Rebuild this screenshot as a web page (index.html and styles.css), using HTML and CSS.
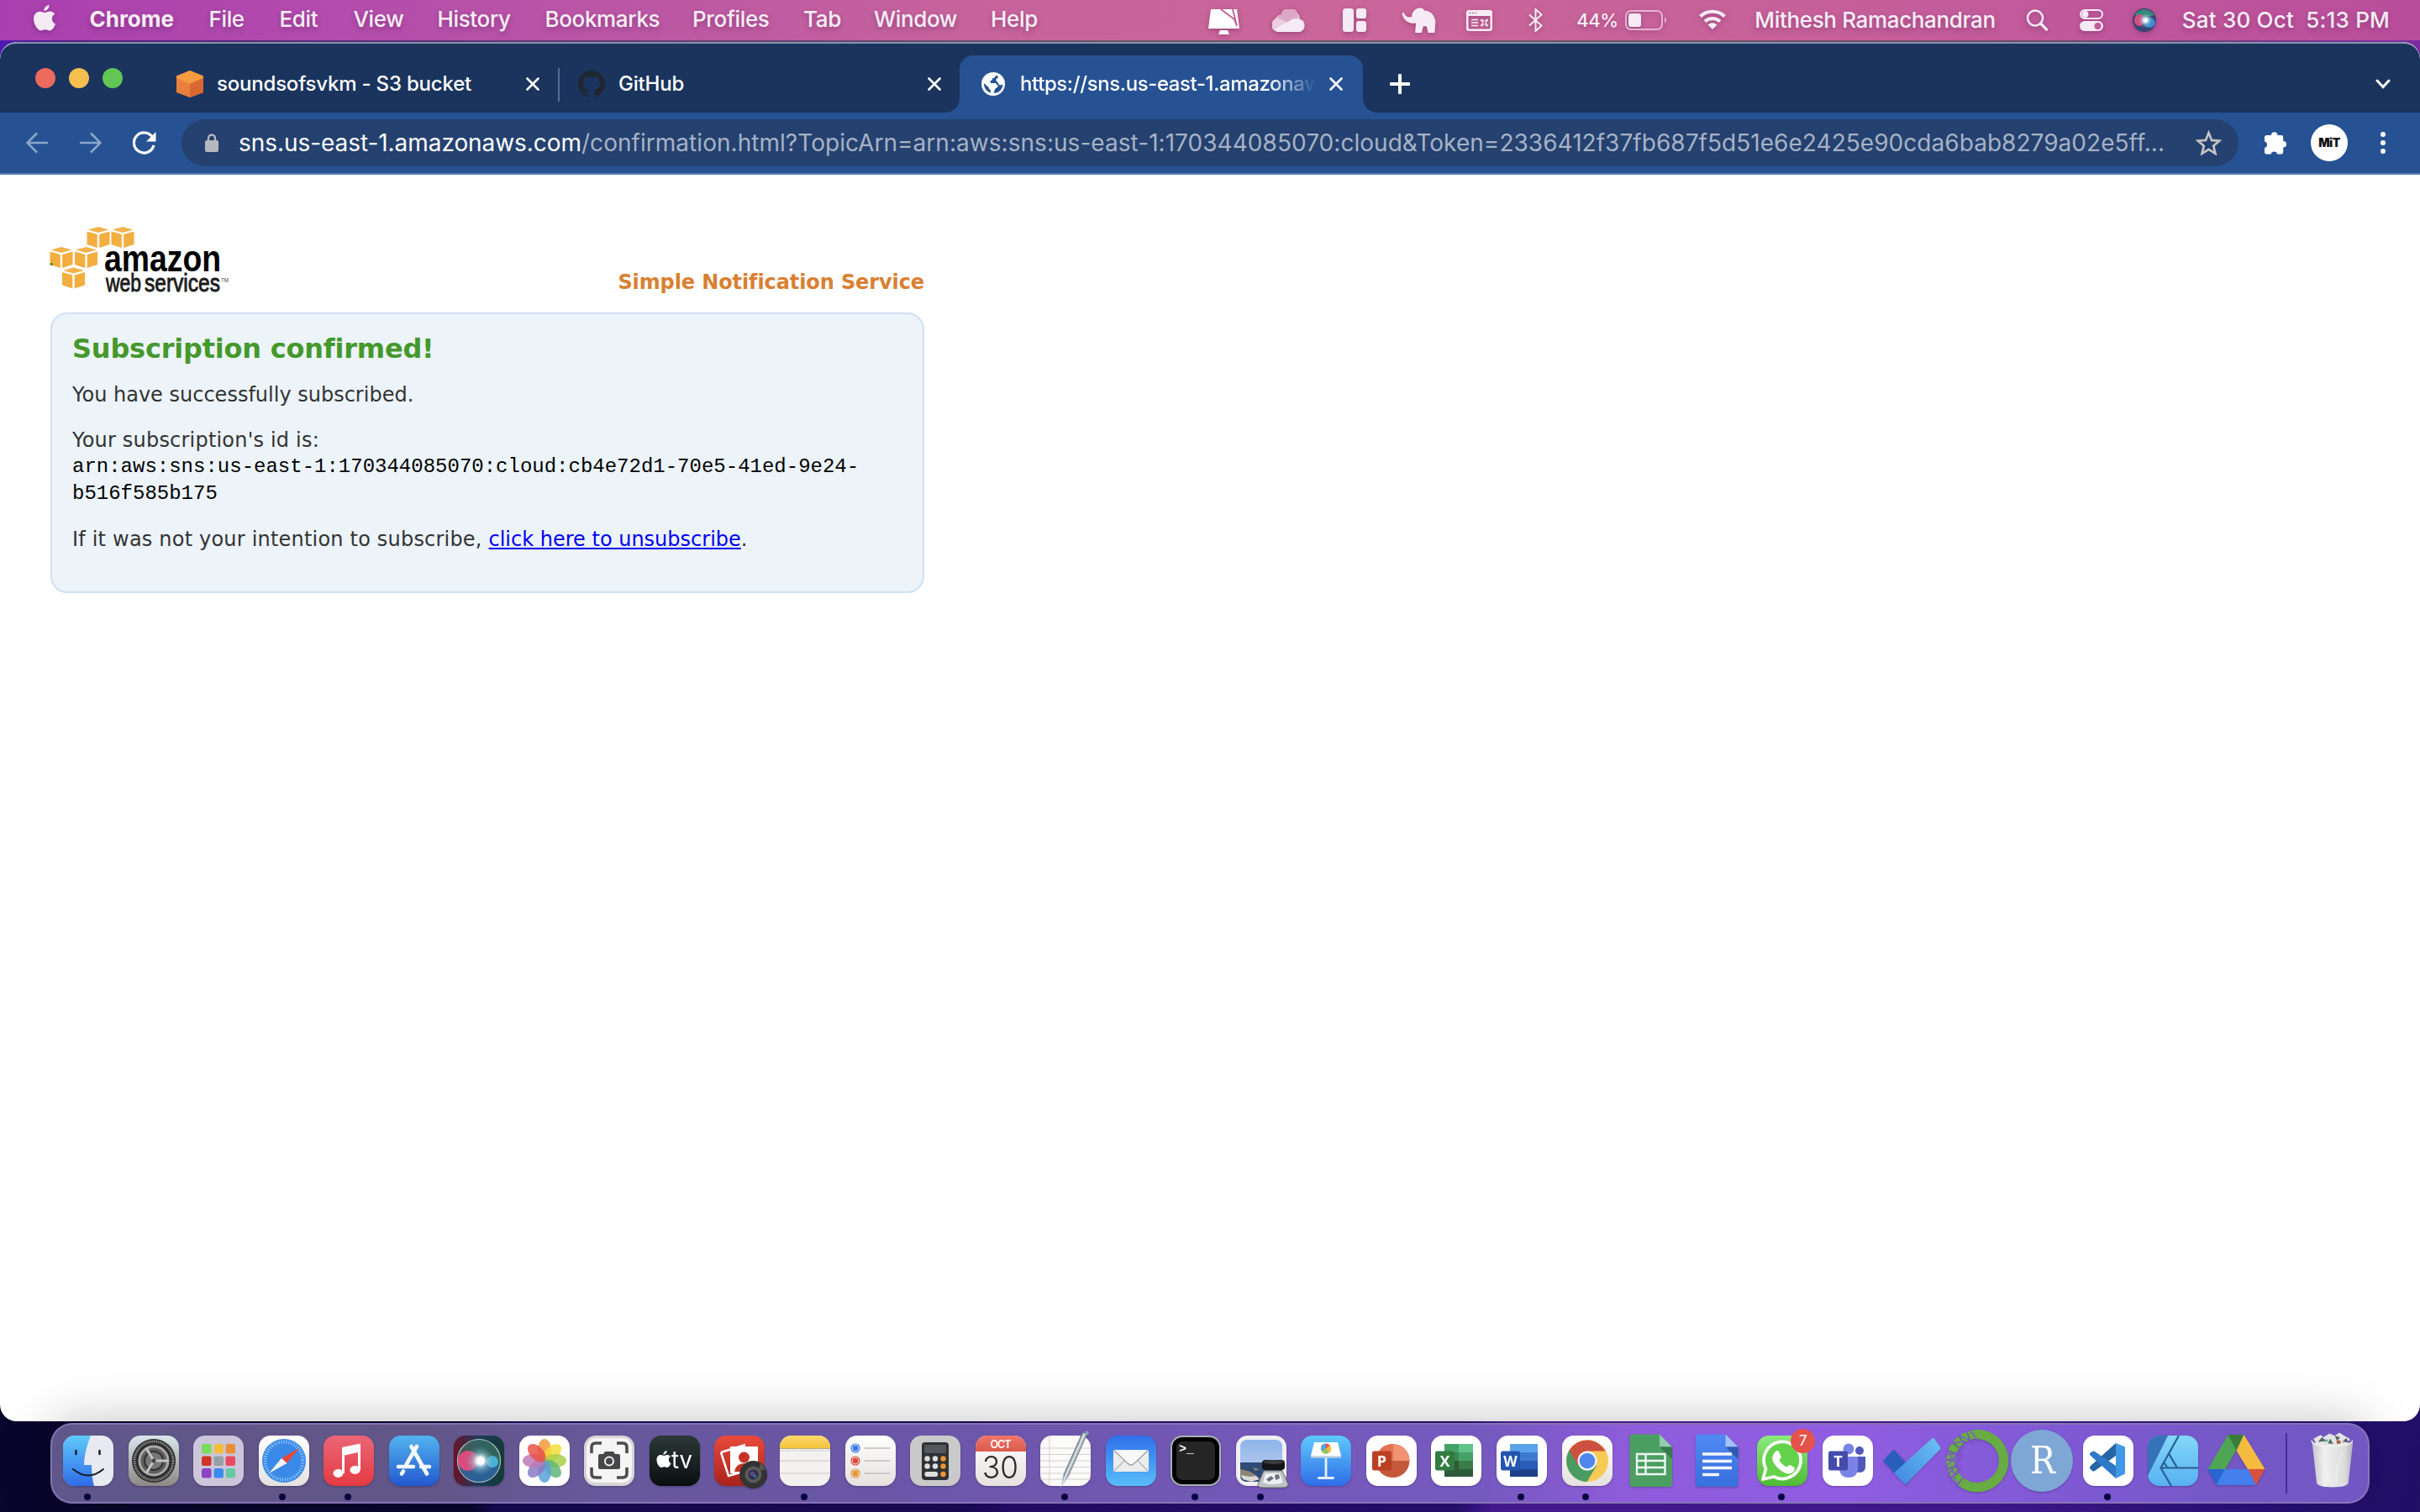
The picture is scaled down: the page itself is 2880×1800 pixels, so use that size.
FILE: index.html
```html
<!DOCTYPE html>
<html lang="en">
<head>
<meta charset="utf-8">
<title>Subscription confirmed</title>
<link rel="stylesheet" href="styles.css">
</head>
<body>
<svg class="defs" width="0" height="0">
  <defs>
    <linearGradient id="gFinder" x2="0" y2="1"><stop stop-color="#5fc9fb"/><stop offset="1" stop-color="#2f6ce8"/></linearGradient>
    <linearGradient id="gPaper" x2="0" y2="1"><stop stop-color="#fff"/><stop offset="1" stop-color="#e4e1df"/></linearGradient>
    <linearGradient id="gSteel" x2="0" y2="1"><stop stop-color="#d9e6ec"/><stop offset="1" stop-color="#8b8884"/></linearGradient>
    <linearGradient id="gSky" x2="0" y2="1"><stop stop-color="#51b4ee"/><stop offset="1" stop-color="#2358cf"/></linearGradient>
    <linearGradient id="gMusic" x2="0" y2="1"><stop stop-color="#ec6678"/><stop offset="1" stop-color="#e33a41"/></linearGradient>
    <linearGradient id="gMail" x2="0" y2="1"><stop stop-color="#2f6feb"/><stop offset="1" stop-color="#58bdf8"/></linearGradient>
    <linearGradient id="gDark" x2="0" y2="1"><stop stop-color="#2c3936"/><stop offset="1" stop-color="#0a0e10"/></linearGradient>
    <linearGradient id="gRed" x2="0" y2="1"><stop stop-color="#ea4a3c"/><stop offset="1" stop-color="#a8221b"/></linearGradient>
    <linearGradient id="gYellow" x2="0" y2="1"><stop stop-color="#fbd96c"/><stop offset="1" stop-color="#f5c33c"/></linearGradient>
    <linearGradient id="gCoral" x2="0" y2="1"><stop stop-color="#f0766b"/><stop offset="1" stop-color="#db5a4c"/></linearGradient>
    <linearGradient id="gGreen" x2="0" y2="1"><stop stop-color="#8bea7d"/><stop offset="1" stop-color="#4fba35"/></linearGradient>
    <linearGradient id="gScene" x2="0" y2="1"><stop stop-color="#8eb4ea"/><stop offset="1" stop-color="#c2d3ee"/></linearGradient>
    <linearGradient id="gTodo" x1="1" x2="0" y2="1"><stop stop-color="#6cc0f5"/><stop offset="1" stop-color="#3f86e0"/></linearGradient>
    <linearGradient id="gAff" x2="0" y2="1"><stop stop-color="#82d7f8"/><stop offset="1" stop-color="#58b0f2"/></linearGradient>
    <linearGradient id="gDocs" x2="0" y2="1"><stop stop-color="#5088f4"/><stop offset="1" stop-color="#376fdc"/></linearGradient>
    <linearGradient id="gSiriBg"><stop stop-color="#6a1428"/><stop offset=".5" stop-color="#1c3a5c"/><stop offset="1" stop-color="#143c36"/></linearGradient>
    <radialGradient id="gSiri" cx=".52" cy=".5" r=".5"><stop stop-color="#fff"/><stop offset=".25" stop-color="#e8f6f8"/><stop offset=".55" stop-color="#a5cfdc" stop-opacity=".5"/><stop offset="1" stop-color="#5c9fac" stop-opacity=".05"/></radialGradient>
    <linearGradient id="gPen"><stop stop-color="#5f6a74"/><stop offset=".5" stop-color="#e3edf2"/><stop offset="1" stop-color="#6b7782"/></linearGradient>
    <linearGradient id="gTrash"><stop stop-color="#c6c6c9"/><stop offset=".3" stop-color="#efefef"/><stop offset=".8" stop-color="#dcdcdd"/><stop offset="1" stop-color="#b3b1bb"/></linearGradient>
    <symbol id="close" viewBox="0 0 16 16"><path d="M1.5 1.5 14.5 14.5M14.5 1.5 1.5 14.5" stroke="#fff" stroke-width="2.6" stroke-linecap="round"/></symbol>
    <symbol id="apple" viewBox="0 0 26 32"><path d="M18.5 0c.3 3.600-2.700 7.100-6.200 7.100C11.900 3.900 15 .5 18.500 0zM13.500 9c1.200 0 3.200-1.400 6-1.400 2.300.1 4.500 1.300 5.700 3.100-5 3-4 9.900.8 11.800-1 2.900-3.500 7.700-6.500 7.900-2.200.1-2.800-1.200-5.600-1.200s-3.500 1.200-5.600 1.200C4.800 30.400 0 22.700 0 16.600 0 10.700 3.900 7.700 7.600 7.700c2.500 0 4.500 1.300 5.900 1.300z"/></symbol>
    <symbol id="cube" viewBox="0 0 28 27"><path d="M1.500 4.500 14 1l12.500 3.500L14 8z" fill="#f3b34a"/><path d="M.5 6.500 12.800 10v16L.5 22zM27.500 6.500 15.200 10v16l12.300-4z" fill="#f2ae3f"/></symbol>
  </defs>
</svg>

<header class="menubar">
  <svg class="apple" viewBox="0 0 26 32"><use href="#apple" fill="#f6ebf5"/></svg>
  <nav class="menus">
    <span class="app">Chrome</span><span>File</span><span>Edit</span><span>View</span><span>History</span><span>Bookmarks</span><span>Profiles</span><span>Tab</span><span>Window</span><span>Help</span>
  </nav>
  <div class="status">
    <svg style="width:37px" viewBox="0 0 37 30"><path d="M3 0h31l3 23H0z" fill="#fff"/><path d="M15 0 31 12 34 20M29 0l5 20" fill="none" stroke="#c05c92" stroke-width="1.800"/><path d="M14 25h9l2 5H12z" fill="#fff"/></svg>
    <svg style="width:40px" viewBox="0 0 40 28"><path d="M8 28A8.500 8.500 0 0 1 3 12 10 10 0 0 1 14 7a10 9 0 0 1 19 5 8.200 8.200 0 0 1 0 16z" fill="#eccfe0"/><path d="M10 7a10 10 0 0 1 21 3l-11 7L5 10z" fill="#dda7c6"/><path d="M3 24 25 12c12-3 19 12 8 16H8q-3 0-5-4z" fill="#f6ebf5"/></svg>
    <svg style="width:28px" viewBox="0 0 28 28"><rect width="13" height="28" rx="3.500"/><rect x="16" width="12" height="12" rx="3"/><rect x="16" y="15" width="12" height="13" rx="3"/></svg>
    <svg style="width:41px" viewBox="0 0 41 31"><path d="M0 7l2-1q3 8 10 5C12 4 18-1 25 1l3 3c8 0 12 7 13 13l-1 14h-8l-2-8h-4l-2 8h-8l1-12c-6 2-16-2-17-12z"/></svg>
    <svg style="width:31px" viewBox="0 0 31 25"><path fill-rule="evenodd" d="M3 0h25q3 0 3 3v19q0 3-3 3H3q-3 0-3-3V3q0-3 3-3zM2.500 7v14q0 1.500 1.500 1.500h23q1.500 0 1.500-1.500V7z"/><path d="M6 11.500h8M6 15h8M6 18.500h8" stroke="#f6ebf5" stroke-width="1.700"/><circle cx="4.500" cy="3.500" r="1" fill="#c96497"/><circle cx="8" cy="3.500" r="1" fill="#c96497"/><circle cx="11.500" cy="3.500" r="1" fill="#c96497"/><g fill="none" stroke="#f6ebf5" stroke-width="1.200"><path d="M19.500 12.500v5M23.500 12.500v5M19 13h5M19 17h5"/><circle cx="18.500" cy="12" r="1"/><circle cx="24.500" cy="12" r="1"/><circle cx="18.500" cy="18" r="1"/><circle cx="24.500" cy="18" r="1"/></g></svg>
    <svg style="width:17px" viewBox="0 0 17 28"><path d="M1 7.500 15.500 20.500 8.500 27V1l7 6.500L1 20.500" fill="none" stroke="#f6ebf5" stroke-width="2"/></svg>
    <span class="pct">44%</span>
    <svg style="width:51px" viewBox="0 0 51 26"><rect x="1" y="2" width="43" height="22" rx="6" fill="none" stroke="#e7b3d0" stroke-width="2"/><rect x="4" y="5" width="15" height="16" rx="3"/><path d="M47 9q4 4 0 8z" fill="#e7b3d0"/></svg>
    <svg style="width:32px" viewBox="0 0 32 24"><g fill="none" stroke="#f6ebf5" stroke-width="4"><path d="M1.500 8.500a21 21 0 0 1 29 0"/><path d="M7 14.500a13.500 13.500 0 0 1 18 0"/></g><path d="M10.500 18.500q5.500-4.500 11 0L16 24z"/></svg>
    <span>Mithesh Ramachandran</span>
    <svg style="width:26px" viewBox="0 0 26 26"><circle cx="11" cy="10.500" r="9" fill="none" stroke="#f6ebf5" stroke-width="2.500"/><path d="m17.500 17 7 7" stroke="#f6ebf5" stroke-width="3.200" stroke-linecap="round"/></svg>
    <svg style="width:28px" viewBox="0 0 28 26"><rect x="1" y="1" width="26" height="10" rx="5" fill="none" stroke="#f6ebf5" stroke-width="2"/><circle cx="6.500" cy="6" r="4"/><rect y="14" width="28" height="12" rx="6"/><circle cx="21.500" cy="20" r="4" fill="#c05b98"/></svg>
    <svg style="width:28px" viewBox="0 0 28 28"><circle cx="14" cy="14" r="14" fill="#37456f"/><path d="M2 8a14 14 0 0 1 24 0q-12 4-24 0z" fill="#36897c"/><ellipse cx="8" cy="14" rx="6" ry="7" fill="#dc4a80"/><ellipse cx="20" cy="17" rx="7" ry="6" fill="#3d87d2"/><circle cx="15" cy="14" r="9" fill="url(#gSiri)"/></svg>
    <span class="clock">Sat 30 Oct&nbsp; 5:13 PM</span>
  </div>
</header>

<main class="window">
  <div class="tabstrip">
    <div class="lights"><i class="red"></i><i class="amber"></i><i class="green"></i></div>
    <div class="tab divided">
      <svg class="fav" viewBox="0 0 32 32"><path d="M16 0 32 6.500V26L16 32 0 26V6.500z" fill="#e8803c"/><path d="M16 0 32 6.500V9L16 16 0 9V6.500z" fill="#f29c40"/><path d="M16 15.500 32 9v17L16 32z" fill="#db6730"/></svg>
      <span class="title">soundsofsvkm - S3 bucket</span>
      <svg class="x"><use href="#close"/></svg>
    </div>
    <div class="tab">
      <svg class="fav" viewBox="0 0 16 16"><path fill="#20272f" d="M8 0C3.580 0 0 3.580 0 8c0 3.540 2.290 6.530 5.470 7.590.4.070.55-.17.55-.38 0-.19-.01-.82-.01-1.490-2.010.37-2.530-.49-2.690-.94-.09-.23-.48-.94-.82-1.130-.28-.15-.68-.52-.01-.53.63-.01 1.080.58 1.230.82.72 1.210 1.870.87 2.330.66.07-.52.28-.87.51-1.070-1.780-.2-3.640-.89-3.640-3.950 0-.87.31-1.590.82-2.150-.08-.2-.36-1.020.08-2.120 0 0 .67-.21 2.200.82.64-.18 1.320-.27 2-.27s1.360.09 2 .27c1.530-1.040 2.200-.82 2.200-.82.44 1.100.16 1.920.08 2.120.51.56.82 1.270.82 2.150 0 3.070-1.870 3.750-3.650 3.950.29.25.54.73.54 1.480 0 1.070-.01 1.930-.01 2.200 0 .21.15.46.55.38A8.010 8.010 0 0 0 16 8c0-4.420-3.580-8-8-8z"/></svg>
      <span class="title">GitHub</span>
      <svg class="x"><use href="#close"/></svg>
    </div>
    <div class="tab active">
      <svg class="fav" viewBox="0 0 32 32"><circle cx="16" cy="16" r="14" fill="#fff"/><path d="M18.500 5.500c1 2-1.500 3.500-3.500 4 0 2-1 2.500-2.500 2.500l.5 3h6c1.500 1 1 2.500 2.500 2.500 1 3-3 3-3.500 5l-1.500 4.200c6 .5 11-4.500 11-10.700-1 1.500-3 1.500-4.500 1l-2-3.500c-2-.5-2-3-1-4 2 0 2-2 1.500-3zM5 15l6 5.500c-.5 2 2 2 2 3.500v2.500C8 25 4.800 20.500 5 15z" fill="#265294"/></svg>
      <span class="title fade">https://sns.us-east-1.amazonaws.com</span>
      <svg class="x"><use href="#close"/></svg>
    </div>
    <svg class="plus" viewBox="0 0 24 24"><path d="M12 1.500v21M1.500 12h21" stroke="#fff" stroke-width="4" stroke-linecap="round"/></svg>
    <svg class="chev" viewBox="0 0 18 12"><path d="m2 2 7 7.500L16 2" fill="none" stroke="#fff" stroke-width="3" stroke-linecap="round"/></svg>
  </div>

  <div class="toolbar">
    <svg class="nav-back" viewBox="0 0 26 26"><path d="M26 13H2M13 1.500 1.500 13 13 24.500" fill="none" stroke="#8aa4cb" stroke-width="2.600"/></svg>
    <svg class="nav-fwd" viewBox="0 0 26 26"><path d="M0 13h24M13 1.500 24.500 13 13 24.500" fill="none" stroke="#8aa4cb" stroke-width="2.600"/></svg>
    <svg class="reload" viewBox="0 0 28 28"><path d="M23.500 7.500A12 12 0 1 0 25 17" fill="none" stroke="#fff" stroke-width="3.200"/><path d="M27.500 1v11.500H16z" fill="#fff"/></svg>
    <div class="omnibox">
      <svg class="lock" viewBox="0 0 16 22"><rect y="8" width="16" height="14" rx="2" fill="#b4b7bd"/><path d="M4 9V5.500a4 4 0 0 1 8 0V9" fill="none" stroke="#b4b7bd" stroke-width="2.400"/></svg>
      <span class="url"><b>sns.us-east-1.amazonaws.com</b>/confirmation.html?TopicArn=arn:aws:sns:us-east-1:170344085070:cloud&amp;Token=2336412f37fb687f5d51e6e2425e90cda6bab8279a02e5ff...</span>
      <svg class="star" viewBox="0 0 30 29"><path d="m15 3 3.400 8.500 9 .7-6.900 5.800 2.200 8.900L15 22l-7.700 4.900 2.200-8.900-6.900-5.800 9-.7z" fill="none" stroke="#c5c3c3" stroke-width="2.600"/></svg>
    </div>
    <svg class="puzzle" viewBox="0 0 28 29"><path d="M2.500 6H8a3.700 3.700 0 0 1 7.400 0H20q2.200 0 2.200 2.300V13a3.800 3.800 0 0 1 0 7.600v5.200q0 2.700-2.400 2.700h-4.600a3.900 3.900 0 0 0-7.600 0H2.500Q0 28.500 0 25.800v-4.700a3.900 3.900 0 0 0 0-7.600V8.500Q0 6 2.500 6z" fill="#fff"/></svg>
    <div class="avatar">MiT</div>
    <svg class="dots" viewBox="0 0 6 26"><circle cx="3" cy="3" r="3"/><circle cx="3" cy="13" r="3"/><circle cx="3" cy="23" r="3"/></svg>
  </div>

  <section class="page">
    <div class="brand">
      <svg class="aws" viewBox="0 0 212 78">
        <use href="#cube" x="43" y="-1" width="28" height="27"/><use href="#cube" x="72" y="-1" width="28" height="27"/>
        <use href="#cube" x="-1" y="23" width="28" height="27"/><use href="#cube" x="28.500" y="23" width="28" height="27"/><use href="#cube" x="13.500" y="47.500" width="28" height="27"/>
        <rect y="43" width="2.500" height="3" fill="#3f8a2d"/>
        <text x="64" y="53" font-size="45" font-weight="700" textLength="139" lengthAdjust="spacingAndGlyphs">amazon</text>
        <text x="66" y="77" font-size="29.500" stroke="#1c1c1c" stroke-width=".9" fill="#1c1c1c" textLength="42" lengthAdjust="spacingAndGlyphs">web</text>
        <text x="112" y="77" font-size="29.500" stroke="#1c1c1c" stroke-width=".9" fill="#1c1c1c" textLength="90" lengthAdjust="spacingAndGlyphs">services</text>
        <text x="203" y="66" font-size="7" fill="#444" textLength="9" lengthAdjust="spacingAndGlyphs">TM</text>
      </svg>
      <h2>Simple Notification Service</h2>
    </div>
    <article class="panel">
      <h1>Subscription confirmed!</h1>
      <p>You have successfully subscribed.</p>
      <p class="idp">Your subscription's id is:</p>
      <code>arn:aws:sns:us-east-1:170344085070:cloud:cb4e72d1-70e5-41ed-9e24-<br>b516f585b175</code>
      <p class="last">If it was not your intention to subscribe, <a href="#">click here to unsubscribe</a>.</p>
    </article>
  </section>
</main>

<footer class="dock">
  <div class="apps">
    <div class="slot run"><svg class="tile" viewBox="0 0 60 60"><rect width="60" height="60" fill="#e7eaf0"/><path d="M0 0h33C28 12 25 26 25 35h9c0 10 1 18 3 25H0z" fill="url(#gFinder)"/><path d="M15.500 18v4M43.500 18v4" stroke="#1a2530" stroke-width="2.600" stroke-linecap="round"/><path d="M12 40q18 15 36 0" fill="none" stroke="#14202c" stroke-width="2" stroke-linecap="round"/></svg></div>
    <div class="slot"><svg class="tile" viewBox="0 0 60 60"><rect width="60" height="60" fill="url(#gSteel)"/><circle cx="30" cy="30" r="26" fill="#2c2c2c"/><circle cx="30" cy="30" r="23" fill="none" stroke="#8c8c8c" stroke-width="3" stroke-dasharray="1.500 1"/><circle cx="30" cy="30" r="17" fill="#5f5f60" stroke="#a9a9a9" stroke-width="3"/><circle cx="30" cy="30" r="11" fill="#777" stroke="#333" stroke-width="2"/><path d="M30 30h17M30 30 21 15M30 30 21 45" stroke="#c4c4c4" stroke-width="3"/><circle cx="30" cy="30" r="2.500" fill="#444"/></svg></div>
    <div class="slot"><svg class="tile" viewBox="0 0 60 60"><rect width="60" height="60" fill="#cbc6da"/><rect x="10" y="10" width="11.500" height="11.500" rx="2.500" fill="#76de5a"/><rect x="24.500" y="10" width="11.500" height="11.500" rx="2.500" fill="#f4bd3e"/><rect x="38.500" y="10" width="11.500" height="11.500" rx="2.500" fill="#e88f35"/><rect x="10" y="24.500" width="11.500" height="11.500" rx="2.500" fill="#cf3426"/><rect x="24.500" y="24.500" width="11.500" height="11.500" rx="2.500" fill="#97a0a4"/><rect x="38.500" y="24.500" width="11.500" height="11.500" rx="2.500" fill="#e94b60"/><rect x="10" y="39" width="11.500" height="11.500" rx="2.500" fill="#8a44c4"/><rect x="24.500" y="39" width="11.500" height="11.500" rx="2.500" fill="#3a8bee"/><rect x="38.500" y="39" width="11.500" height="11.500" rx="2.500" fill="#66c9a4"/></svg></div>
    <div class="slot run"><svg class="tile" viewBox="0 0 60 60"><rect width="60" height="60" fill="url(#gPaper)"/><circle cx="30" cy="30" r="26" fill="#3989e8"/><circle cx="30" cy="30" r="22.500" fill="none" stroke="#a5d0fa" stroke-width="4" stroke-dasharray="1 2"/><path d="M48.500 14.500 33.500 33 27 27z" fill="#e8483c"/><path d="M12 45 27 27l6.500 6z" fill="#f3f3f3"/></svg></div>
    <div class="slot run"><svg class="tile" viewBox="0 0 60 60"><rect width="60" height="60" fill="url(#gMusic)"/><path d="M22 14 44 9.500V41h-3V20l-16 3.500V45h-3z" fill="#fff"/><ellipse cx="17.500" cy="45" rx="6" ry="5" fill="#fff"/><ellipse cx="37.500" cy="41" rx="6" ry="5" fill="#fff"/></svg></div>
    <div class="slot"><svg class="tile" viewBox="0 0 60 60"><rect width="60" height="60" fill="url(#gSky)"/><g stroke="#f4f8fc" stroke-width="4.600" stroke-linecap="round"><path d="M33 13 20.500 34.500M26.500 13 45 45.500M11 37h18M38 37h10M17 42.500l-2 3"/></g></svg></div>
    <div class="slot"><svg class="tile" viewBox="0 0 60 60"><rect width="60" height="60" fill="url(#gSiriBg)"/><circle cx="30" cy="30" r="25.500" fill="#3f7d68" fill-opacity=".6" stroke="#a9c2be" stroke-width="1.200"/><path d="M6 36q24-10 48 0-6 19-24 19T6 36z" fill="#2b62a8" opacity=".75"/><circle cx="17" cy="30" r="12" fill="#ec4a80" opacity=".9"/><circle cx="46" cy="31" r="7" fill="#4bb9e6" opacity=".9"/><circle cx="31" cy="30" r="17" fill="url(#gSiri)"/><circle cx="32" cy="30" r="5" fill="#fff" opacity=".8"/></svg></div>
    <div class="slot"><svg class="tile" viewBox="0 0 60 60"><rect width="60" height="60" fill="#fff"/><g fill-opacity=".85"><ellipse cx="30" cy="17" rx="8" ry="13" fill="#f19a37"/><ellipse cx="30" cy="17" rx="8" ry="13" fill="#f4dd3a" transform="rotate(45 30 30)"/><ellipse cx="30" cy="17" rx="8" ry="13" fill="#a9cf4a" transform="rotate(90 30 30)"/><ellipse cx="30" cy="17" rx="8" ry="13" fill="#62b678" transform="rotate(135 30 30)"/><ellipse cx="30" cy="17" rx="8" ry="13" fill="#5aa0dc" transform="rotate(180 30 30)"/><ellipse cx="30" cy="17" rx="8" ry="13" fill="#8a7cc4" transform="rotate(225 30 30)"/><ellipse cx="30" cy="17" rx="8" ry="13" fill="#c079b4" transform="rotate(270 30 30)"/><ellipse cx="30" cy="17" rx="8" ry="13" fill="#ea5247" transform="rotate(315 30 30)"/></g></svg></div>
    <div class="slot"><svg class="tile" viewBox="0 0 60 60"><rect width="60" height="60" fill="#d5d5d7"/><rect x="3" y="3" width="54" height="53" rx="11" fill="#f5f5f5"/><path d="M9 21v-7q0-5 5-5h7M39 9h7q5 0 5 5v7M51 38v7q0 5-5 5h-7M21 50h-7q-5 0-5-5v-7" fill="none" stroke="#4d4d4f" stroke-width="3.600"/><path d="M19 22h4l2-3h10l2 3h4q2 0 2 2v14q0 2-2 2H19q-2 0-2-2V24q0-2 2-2z" fill="#474749"/><circle cx="30" cy="30.500" r="5" fill="none" stroke="#f2f2f2" stroke-width="2"/></svg></div>
    <div class="slot"><svg class="tile" viewBox="0 0 60 60"><rect width="60" height="60" fill="url(#gDark)"/><use href="#apple" x="8" y="18" width="18" height="21" fill="#fff"/><text x="26" y="39" font-family="Inter" font-size="29" font-weight="400" fill="#fff" textLength="25" lengthAdjust="spacingAndGlyphs">tv</text></svg></div>
    <div class="slot"><svg class="free" viewBox="0 0 60 60"><rect width="60" height="60" rx="14" fill="url(#gRed)"/><path d="m8 20 29-9M8 20l9 28 14-4" fill="none" stroke="#fff" stroke-width="2.500"/><path d="M19 13h33v32H19z" fill="#fff"/><circle cx="35.500" cy="26" r="6.500" fill="#c63228"/><path d="M24 43q2-10 11.500-10T47 43z" fill="#c63228"/><circle cx="46.500" cy="46.500" r="16.500" fill="#333"/><path d="M55 33a16 16 0 0 1 6 7l-9 3z" fill="#555"/><circle cx="46.500" cy="46.500" r="10" fill="#5a5a5c"/><circle cx="46.500" cy="46.500" r="6" fill="#2b2f48"/><circle cx="45.500" cy="45.500" r="3" fill="#5c4580"/><circle cx="48.500" cy="48.500" r="2" fill="#2c6f84"/></svg></div>
    <div class="slot run"><svg class="tile" viewBox="0 0 60 60"><rect width="60" height="60" fill="#f4f2f0"/><rect width="60" height="15" fill="url(#gYellow)"/><path d="M0 15.500h60" stroke="#b7a981" stroke-width="1.200"/><path d="M0 18h60" stroke="#aaa" stroke-width="1" stroke-dasharray="1.500 1.500"/><path d="M0 30h60M0 45h60" stroke="#d6d4d3" stroke-width="1.300"/></svg></div>
    <div class="slot"><svg class="tile" viewBox="0 0 60 60"><rect width="60" height="60" fill="url(#gPaper)"/><g fill="none" stroke-width="1.200"><circle cx="12" cy="15" r="5" stroke="#3478f0"/><circle cx="12" cy="30" r="5" stroke="#e0493c"/><circle cx="12" cy="45" r="5" stroke="#e69435"/></g><circle cx="12" cy="15" r="3.400" fill="#3478f0"/><circle cx="12" cy="30" r="3.400" fill="#e0493c"/><circle cx="12" cy="45" r="3.400" fill="#e69435"/><path d="M22.500 15h31M22.500 30h31M22.500 45h31" stroke="#bfbfc1" stroke-width="1.300"/></svg></div>
    <div class="slot"><svg class="tile" viewBox="0 0 60 60"><rect width="60" height="60" fill="#c9c9ca"/><rect x="14" y="8" width="32" height="45" rx="4" fill="#2e3236"/><rect x="17" y="11" width="26" height="10" rx="1.500" fill="#53585d"/><g fill="#dedede"><circle cx="20.500" cy="27.500" r="3.200"/><circle cx="30" cy="27.500" r="3.200"/><circle cx="20.500" cy="36.500" r="3.200"/><circle cx="30" cy="36.500" r="3.200"/><rect x="17.300" y="43" width="16" height="6" rx="3"/></g><g fill="#ee9430"><circle cx="39.500" cy="27.500" r="3.200"/><circle cx="39.500" cy="36.500" r="3.200"/><circle cx="39.500" cy="46" r="3.200"/></g></svg></div>
    <div class="slot"><svg class="tile" viewBox="0 0 60 60"><rect width="60" height="60" fill="url(#gPaper)"/><rect width="60" height="19" fill="url(#gCoral)"/><text x="30" y="14.500" text-anchor="middle" font-family="Inter" font-weight="600" font-size="12.500" fill="#fff" textLength="25">OCT</text><text x="29.500" y="50.500" text-anchor="middle" font-family="Inter" font-weight="300" font-size="37" fill="#2b2b2d" textLength="43" lengthAdjust="spacingAndGlyphs">30</text></svg></div>
    <div class="slot run"><svg class="free" viewBox="0 0 60 60"><rect width="60" height="60" rx="14" fill="#fbfbfa"/><path d="M0 15h60M0 22.500h60M0 30h60M0 37.500h60M0 45h60M0 52h60" stroke="#cfcfcf" stroke-width="1.200"/><path d="M11 0v60" stroke="#edcdc8" stroke-width="1.200"/><path d="M0 0h6.500v54L3.300 71 0 54z" transform="translate(50 -4) rotate(24)" fill="url(#gPen)"/><path d="m54-6 4 2-1 4-4-2z" fill="#7aa2bc"/></svg></div>
    <div class="slot"><svg class="tile" viewBox="0 0 60 60"><rect width="60" height="60" fill="url(#gMail)"/><rect x="9" y="17" width="42" height="26" rx="2" fill="#ececec"/><path d="m10 42 15-15m10 0 15 15" stroke="#aeb1b4" fill="none" stroke-width="1.200"/><path d="m10 18 16 15q4 4 8 0l16-15" fill="#f8f8f8" stroke="#9c9fa2" stroke-width="1.200"/></svg></div>
    <div class="slot run"><svg class="tile" viewBox="0 0 60 60"><rect width="60" height="60" fill="#a9b3b7"/><rect x="2" y="2" width="56" height="56" rx="12" fill="#000"/><rect x="7" y="7" width="46" height="46" rx="7" fill="#252526"/><text x="10" y="20" font-family="Liberation Mono" font-weight="700" font-size="15" fill="#fff">&gt;_</text></svg></div>
    <div class="slot run"><svg class="free" viewBox="0 0 60 60"><rect width="60" height="60" rx="14" fill="#f0eff1"/><rect x="5" y="5" width="50" height="50" rx="8" fill="url(#gScene)"/><path d="M5 32h50v15q0 8-8 8H13q-8 0-8-8z" fill="#2f4a76"/><path d="m5 40 12 3 8 5-6 3-14-1zM20 38l8 2-5 2z" fill="#8d8577"/><path d="m6 47 10 2 8-1 4 4-10 3-10-3z" fill="#dcdad6"/><path d="M33 42h22l7 16q0 4-8 4H33q-8 0-7-4z" fill="#bfc3c6" stroke="#6a6c70" stroke-width="1"/><path d="m35 45 17 0 4 11q-12 4-24 0z" fill="#eef0f2"/><path d="m36 52 6-4 3 3-6 4zM46 47l5-1 1 5-5 2z" fill="#67727e"/><rect x="31" y="29" width="27" height="12" rx="4" fill="#141416"/><ellipse cx="44.500" cy="31.500" rx="12" ry="2.500" fill="#3a3a3d"/></svg></div>
    <div class="slot"><svg class="tile" viewBox="0 0 60 60"><rect width="60" height="60" fill="url(#gFinder)"/><path d="M16 8h28l4 16H12z" fill="#fff"/><path d="M12 24h36v2.500H12z" fill="#c9d5df"/><circle cx="30" cy="15.500" r="6" fill="#e8514a"/><path d="M30 15.500v-6a6 6 0 0 0-5.500 8.500z" fill="#53a5e6"/><path d="m30 15.500-5.500 2.500a6 6 0 0 0 9 2.500z" fill="#8cc957"/><path d="m30 15.500 3.500 5a6 6 0 0 0 1-9z" fill="#f2bd3c"/><path d="M30 26.500V50" stroke="#eaf1f6" stroke-width="2.800"/><rect x="20" y="49" width="20" height="3" rx="1.500" fill="#e3edf5"/></svg></div>
    <div class="slot"><svg class="tile" viewBox="0 0 60 60"><rect width="60" height="60" fill="#fff"/><circle cx="31.500" cy="30" r="20" fill="#c5593b"/><path d="M31.500 10a20 20 0 0 1 20 20h-20z" fill="#f19373"/><path d="M31.500 10v20H11.500a20 20 0 0 1 20-20z" fill="#e47150"/><rect x="7" y="18.500" width="23" height="23" rx="2.500" fill="#bb3f22"/><text x="18.500" y="36.500" text-anchor="middle" font-family="Open Sans" font-weight="700" font-size="18" fill="#fff">P</text></svg></div>
    <div class="slot"><svg class="tile" viewBox="0 0 60 60"><rect width="60" height="60" fill="#fff"/><path d="M16 10h17v12H16z" fill="#45a168"/><path d="M33 10h17v10H33z" fill="#61c38a"/><path d="M16 20h17v10H16z" fill="#3c8750"/><path d="M33 20h17v10H33z" fill="#45a168"/><path d="M16 30h17v19H16z" fill="#2c5a38"/><path d="M33 30h17v10H33z" fill="#3a7c47"/><path d="M33 40h17v9H33z" fill="#2c5c38"/><rect x="5" y="18.500" width="23" height="23" rx="2.500" fill="#317c41"/><text x="16.500" y="36.500" text-anchor="middle" font-family="Open Sans" font-weight="700" font-size="18" fill="#fff">X</text></svg></div>
    <div class="slot run"><svg class="tile" viewBox="0 0 60 60"><rect width="60" height="60" fill="#fff"/><path d="M16 10h33v10H16z" fill="#5aa4ec"/><path d="M16 20h33v10H16z" fill="#3e7acd"/><path d="M16 30h33v10H16z" fill="#2a5bb9"/><path d="M16 40h33v9H16z" fill="#1e4189"/><rect x="5" y="18.500" width="23" height="23" rx="2.500" fill="#2455ae"/><text x="16.500" y="36.500" text-anchor="middle" font-family="Open Sans" font-weight="700" font-size="17" fill="#fff">W</text></svg></div>
    <div class="slot run"><svg class="tile" viewBox="0 0 60 60"><rect width="60" height="60" fill="url(#gPaper)"/><circle cx="30" cy="30" r="25" fill="#f6ca55"/><path d="M30 30 8.500 17.500a25 25 0 0 0 21 37.500L41 36z" fill="#4a9c62"/><path d="M8.500 17.500a25 25 0 0 1 43.300 1H30l-11 17z" fill="#cd5141"/><circle cx="30" cy="30" r="11.500" fill="#f5f5f5"/><circle cx="30" cy="30" r="9.300" fill="#4f87ec"/></svg></div>
    <div class="slot"><svg class="free" viewBox="0 0 60 60"><path d="M6.500-1.500H39l15 15V58q0 3-3 3H6.500q-3 0-3-3V1.500q0-3 3-3z" fill="#4a9f60"/><path d="m39-1.500 15 15H39z" fill="#90ccac"/><path d="M39 13.500h15V28z" fill="#37794a"/><path d="M12 22h33.500v24H12zM12 30h33.500M12 38h33.500M22.500 22v24" fill="none" stroke="#f1f6f2" stroke-width="2.400"/></svg></div>
    <div class="slot"><svg class="free" viewBox="0 0 60 60"><path d="M7-1.500h32.500l15 15V58q0 3-3 3H7q-3 0-3-3V1.500q0-3 3-3z" fill="url(#gDocs)"/><path d="m39.500-1.500 15 15h-15z" fill="#a4c1f9"/><path d="M39.500 13.500h15V28z" fill="#2e59ad"/><path d="M12 22h35M12 30.500h35M12 38.500h35M12 46.500h20" stroke="#f4f6fb" stroke-width="3.400"/></svg></div>
    <div class="slot run"><svg class="free" viewBox="0 0 60 60"><rect width="60" height="60" rx="14" fill="url(#gGreen)"/><path d="m7 52 3.500-12.500A22 22 0 1 1 20 49z" fill="#65d24c" stroke="#f6fbf4" stroke-width="3.800" stroke-linejoin="round"/><path d="M22 19q2-2 4 0l2.500 6q.5 2-2 4 3 6 9 8.500 2-3 4-2.500l5 3q1 2-1 5-4 4-10 1.500-11-5-15-15-1-6 3.500-10.500z" fill="#fff"/></svg><span class="badge">7</span></div>
    <div class="slot"><svg class="tile" viewBox="0 0 60 60"><rect width="60" height="60" fill="#fff"/><circle cx="44" cy="18" r="5" fill="#5057b7"/><path d="M36 25h15v12q0 7-7 7t-8-7z" fill="#5057b7"/><circle cx="31" cy="16" r="6.500" fill="#7b83e8"/><path d="M20 25h22v13q0 12-11 12T20 38z" fill="#7b83e8"/><rect x="7" y="18.500" width="23" height="23" rx="2.500" fill="#444bab"/><text x="18.500" y="36.500" text-anchor="middle" font-family="Open Sans" font-weight="700" font-size="18" fill="#fff">T</text></svg></div>
    <div class="slot"><svg class="free" viewBox="0 0 60 60"><path d="m-5 30 12-12.500q1-1 2 0L31 42 23 58q-1 1-2 0z" fill="#2a5ebc"/><path d="m9 43.500 44-40q2-1 3 0l7 10q1 2 0 3L23 57q-1.500 1.500-3 0L9 46q-1-1 0-2.500z" fill="url(#gTodo)"/></svg></div>
    <div class="slot"><svg class="free" viewBox="0 0 60 60"><path d="M27-1.400A31.500 31.500 0 1 1 12 56.500" fill="none" stroke="#67ad43" stroke-width="11.500"/><path d="M27-1.400A31.500 31.500 0 0 0 12 56.500" fill="none" stroke="#67ad43" stroke-width="10.500" stroke-dasharray="8 1.400"/><path d="M19-8 31 7M6-1l19 9M-3 9l19-2M-8 22l20 0M-8 16l14 22M12 12-8 38M10 24-6 48M-2 36l8 26M8 38-4 54" stroke="#8357d4" stroke-width="1.500"/></svg></div>
    <div class="slot"><svg class="free" viewBox="0 0 60 60"><circle cx="29" cy="30" r="37" fill="#7ea7d6"/><text x="15" y="45" font-family="DejaVu Serif" font-size="45" fill="#fff" textLength="30" lengthAdjust="spacingAndGlyphs">R</text></svg></div>
    <div class="slot run"><svg class="tile" viewBox="0 0 60 60"><rect width="60" height="60" fill="#fff"/><path d="m9 36 30-27v15L14 42q-2 1-3 0l-3-3q-.5-1.500 1-3z" fill="#2565a4"/><path d="m9 24 30 27V36L14 19q-2-1-3 0l-3 2q-.5 1.500 1 3z" fill="#2e79c8"/><path d="m39 9 11 4.500v32L39 51z" fill="#4098e6"/></svg></div>
    <div class="slot"><svg class="tile" viewBox="0 0 60 60"><rect width="60" height="60" fill="url(#gAff)"/><path d="M0 0h24L0 48z" fill="#3672b8"/><path d="M37 0 15.500 38.500 28 60M15.500 38.500H60M25.500 22 35 38.500M20 33l3 4.500" stroke="#275f92" stroke-width="2.200" fill="none"/></svg></div>
    <div class="slot"><svg class="free" viewBox="0 0 60 60"><g transform="translate(-2.500 0)"><path d="M20-1h20L17 40H-4z" fill="#4ea553"/><path d="M20-1h19L30 18z" fill="#3a7d3b"/><path d="M39-1 64 40H43.500L30 18z" fill="#f5bb40"/><path d="M-4 40h68L53 59H7z" fill="#4380ee"/><path d="M-4 40h20L6 59z" fill="#2866d2"/><path d="M44 40h20L53.500 59z" fill="#d9503d"/></g></svg></div>
  </div>
  <i class="sep"></i>
  <svg class="trash" viewBox="0 0 60 72"><path d="M4 12q24 8 54 0l-6 54q-1 6-21 6t-21-6z" fill="url(#gTrash)"/><path d="m6 8 9-5 4 3 8-5 7 3 6-4 8 5 6 3-3 7q-20 6-41 1z" fill="#e3e4e4"/><path d="m12 12 5-6 6 5zM34 4l7 2-4 5zM44 12l5-5 4 6zM25 14l3-6 4 7z" fill="#5c6265"/><path d="m20 9 6 0-3 4z" fill="#55b8a6"/><path d="m36 11 5-1 1 4-5 1z" fill="#a95d40"/><path d="M4 10q-2 4 7 6 19 4 38 0 9-2 8-6" fill="none" stroke="#f2f2f4" stroke-width="1.500"/><path d="M12 30q12 14 14 36M44 26q-9 18-8 40" fill="none" stroke="#f6f6f6" stroke-width="3" opacity=".35"/></svg>
</footer>
</body>
</html>
```
FILE: styles.css
```css
* { box-sizing: border-box; }
html, body { height: 100%; }
body {
  margin: 0;
  width: 2880px;
  height: 1800px;
  overflow: hidden;
  display: flex;
  flex-direction: column;
  font-family: Inter, "Liberation Sans", sans-serif;
  background:
    linear-gradient(90deg, #4f1ab2 0, #52207f 3%, #6b5966 50%, #6a4b68 85%, #7c2aa2 100%) top / 100% 80px no-repeat,
    linear-gradient(100deg, #09052a 0, #0b0630 27.500%, #170b56 28.300%, #1c0a5c 46%, #260c70 47.500%, #270e75 64%, #4d1c9e 65.500%, #451a99 84%, #2b1280 94%, #1f0f66 100%);
}
.defs { position: absolute; }

/* macOS menu bar */
.menubar {
  flex: none;
  height: 48px;
  display: flex;
  align-items: center;
  padding: 0 36px 0 40px;
  background: linear-gradient(92deg, #a93fae 0, #b14aad 12%, #bc57a4 27%, #c6639c 40%, #ca669a 55%, #c6609a 75%, #b94d9c 100%);
  color: #f8eef6;
  font-size: 26px;
  font-weight: 500;
  letter-spacing: -.35px;
  white-space: pre;
  text-shadow: 0 3px 6px rgba(60, 10, 60, .3);
}
.menubar svg { fill: #f6ebf5; filter: drop-shadow(0 2px 3px rgba(60, 10, 60, .3)); }
.apple { width: 26px; height: 32px; margin-top: -4px; }
.menus {
  margin-left: 40.500px;
  display: grid;
  grid-template-columns: 142px 84px 88px 100px 128px 175.500px 132px 84px 139px auto;
  line-height: 46px;
  height: 48px;
}
.app { font-weight: 700; letter-spacing: 0; }
.status { margin-left: auto; display: flex; align-items: center; line-height: 46px; height: 48px; }
.clock { letter-spacing: .2px; }
.status svg { flex: none; height: 30px; margin-right: 40px; }
.status svg:nth-of-type(1) { margin-right: 39px; margin-top: 4px; }
.status svg:nth-of-type(2) { margin-right: 44px; height: 27px; }
.status svg:nth-of-type(3) { margin-right: 42px; height: 28px; }
.status svg:nth-of-type(4) { margin-right: 36px; }
.status svg:nth-of-type(5) { margin-right: 43px; height: 25px; }
.status svg:nth-of-type(6) { margin-right: 40px; height: 28px; }
.pct { font-size: 22px; letter-spacing: -.5px; width: 58px; line-height: 48px; height: 48px; }
.status svg:nth-of-type(7) { margin-right: 37px; height: 26px; }
.status svg:nth-of-type(8) { margin-right: 34px; height: 24px; margin-top: -2px; }
.status svg:nth-of-type(9) { margin: 0 38px 0 36px; height: 26px; }
.status svg:nth-of-type(10) { margin-right: 35px; height: 26px; }
.status svg:nth-of-type(11) { margin-right: 31px; height: 28px; }

/* Browser window */
.window {
  flex: none;
  position: relative;
  margin-top: 2px;
  height: 1642px;
  display: flex;
  flex-direction: column;
  background: #fff;
  border-radius: 20px;
  overflow: hidden;
}
.tabstrip {
  flex: none;
  height: 84px;
  display: flex;
  align-items: flex-end;
  background: #1a345e;
  border-top: 2px solid #8793ab;
  border-radius: 20px 20px 0 0;
}
.lights { display: flex; gap: 16px; width: 186px; padding-left: 42px; height: 68px; align-items: center; margin-bottom: 7px; }
.lights i { width: 24px; height: 24px; border-radius: 50%; }
.red { background: #ed6a5e; }
.amber { background: #f5bf4f; }
.green { background: #62c655; }
.tab {
  position: relative;
  width: 478px;
  height: 68px;
  display: flex;
  align-items: center;
  padding: 0 22px 0 24px;
  color: #fff;
}
.tab.divided::after { content: ""; position: absolute; right: -2px; top: 15px; width: 2px; height: 40px; background: #5a6d8c; }
.fav { width: 32px; height: 32px; flex: none; }
.title { flex: 1; margin: -1px 10px 0 16px; font-size: 24px; font-weight: 500; letter-spacing: -.2px; white-space: nowrap; overflow: hidden; line-height: 34px; }
.title.fade { letter-spacing: -.4px; margin-right: 16px; -webkit-mask-image: linear-gradient(90deg, #000 84%, transparent); mask-image: linear-gradient(90deg, #000 84%, transparent); }
.x { width: 16px; height: 16px; flex: none; }
.tab.active { width: 480px; padding-right: 24px; background: #265294; border-radius: 16px 16px 0 0; }
.tab.active::before, .tab.active::after { content: ""; position: absolute; bottom: 0; width: 16px; height: 16px; }
.tab.active::before { left: -16px; background: radial-gradient(circle at 0 0, transparent 15.500px, #265294 16px); }
.tab.active::after { right: -16px; background: radial-gradient(circle at 100% 0, transparent 15.500px, #265294 16px); }
.plus { width: 24px; height: 24px; margin: 0 0 22px 32px; }
.chev { width: 18px; height: 12px; margin: 0 35px 28px auto; }

.toolbar {
  flex: none;
  height: 74px;
  display: flex;
  align-items: center;
  padding: 0 41px 0 31px;
  background: #265294;
  border-bottom: 2px solid #5b7fb6;
}
.nav-back, .nav-fwd { width: 26px; height: 26px; }
.nav-fwd { margin-left: 38px; }
.reload { width: 28px; height: 28px; margin-left: 37px; }
.omnibox {
  width: 2448px;
  height: 56px;
  margin-left: 30px;
  border-radius: 28px;
  background: #24416f;
  display: flex;
  align-items: center;
  padding: 0 20px 0 28px;
}
.lock { width: 16px; height: 22px; }
.url { flex: 1; margin-left: 24px; margin-top: -1px; font-size: 28px; line-height: 36px; white-space: nowrap; letter-spacing: .04px; color: #a6b2c5; }
.url b { font-weight: 400; color: #fff; letter-spacing: -.06px; }
.star { width: 31px; height: 30px; }
.puzzle { width: 28px; height: 29px; margin-left: 31px; margin-top: -1px; }
.avatar { width: 44px; height: 44px; margin-left: 27px; border-radius: 50%; background: #fff; color: #111; font-size: 14px; font-weight: 900; line-height: 44px; text-align: center; letter-spacing: -.5px; }
.dots { width: 6px; height: 26px; margin-left: auto; fill: #fff; }

/* Confirmation page */
.page { flex: 1; padding: 62px 0 0 60px; font-family: "DejaVu Sans", Verdana, sans-serif; }
.brand { width: 1040px; height: 102px; display: flex; justify-content: space-between; }
.aws { width: 212px; height: 78px; font-family: "Liberation Sans", Arial, sans-serif; overflow: visible; }
h2 { margin: 51px 0 0; font-size: 24px; line-height: 30px; font-weight: 700; letter-spacing: -.1px; color: #d98032; white-space: nowrap; }
.panel { width: 1040px; height: 334px; border: 2px solid #cfe0f2; border-radius: 20px; background: #ecf4fa; padding: 0 24px; color: #333; font-size: 24px; line-height: 32px; }
h1 { margin: 20.500px 0 0; font-size: 32px; line-height: 40px; letter-spacing: -.22px; color: #45982b; }
p { margin: 0; padding-top: 19px; white-space: nowrap; }
.idp { padding-top: 22px; letter-spacing: .2px; }
.last { padding-top: 22px; letter-spacing: .2px; }
code { display: block; font-family: "Liberation Mono", "Courier New", monospace; font-size: 24px; line-height: 32px; color: #000; }
a { color: #0000ee; letter-spacing: 0; }

/* Dock */
.dock {
  flex: none;
  position: relative;
  width: 2760px;
  height: 96px;
  margin: 2px 0 0 60px;
  border: 2px solid rgba(255, 255, 255, .16);
  border-radius: 26px;
  background: linear-gradient(95deg, #5f578a 0, #615687 16%, #67589c 24%, #6b56a9 38%, #7458b8 52%, #7659bf 62%, #8e5cdb 68%, #905de2 77%, #7f59d4 87%, #7558c6 94%, #7256c2 100%) padding-box, #7159a8 border-box;
  box-shadow: 0 0 60px rgba(0, 0, 0, .26);
  display: flex;
  align-items: flex-start;
  padding: 13px 0 0 4.200px;
}
.apps { display: grid; grid-template-columns: repeat(34, 77.550px); }
.slot { position: relative; display: flex; justify-content: center; height: 80px; }
.slot svg { width: 60px; height: 60px; overflow: visible; filter: drop-shadow(0 1px 1px rgba(0, 0, 0, .25)); }
.slot svg.tile { border-radius: 14px; overflow: hidden; }
.slot.run::after { content: ""; position: absolute; left: 33.500px; top: 69px; width: 8px; height: 8px; border-radius: 50%; background: #07023f; }
.badge { position: absolute; left: 49px; top: -8px; width: 29px; height: 29px; border-radius: 50%; background: #e5524a; color: #fff; font-size: 17px; line-height: 29px; text-align: center; }
.sep { width: 2px; height: 72px; margin: -3px 0 0 17px; background: #4a2a9e; }
.trash { width: 54px; height: 70px; margin: -6px 0 0 26px; }
```
